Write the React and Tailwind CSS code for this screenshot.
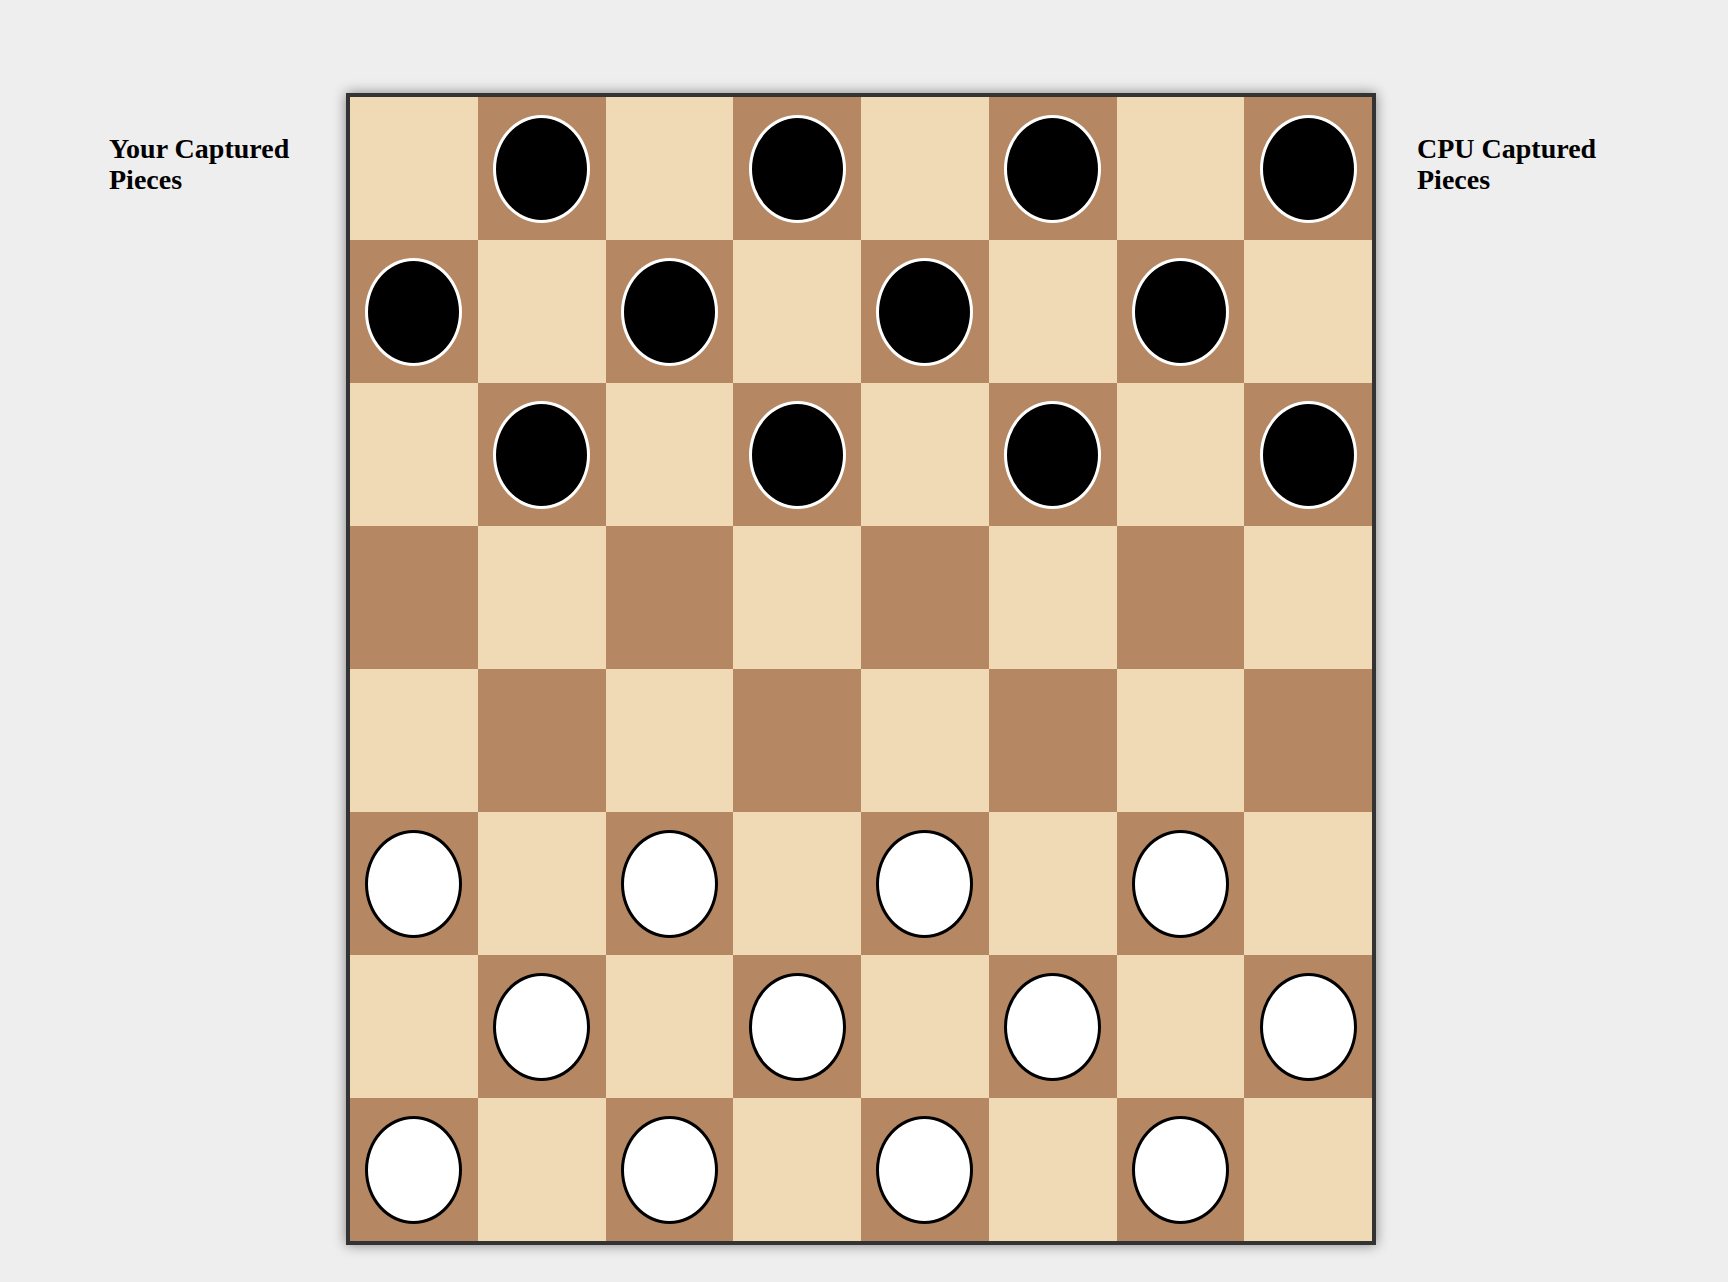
import React from 'react';

// 8x8 board: rows 0-2 hold the CPU's black men, rows 5-7 the player's white men
const buildBoard = () => {
  const rows = [];
  for (let r = 0; r < 8; r++) {
    const row = [];
    for (let c = 0; c < 8; c++) {
      const dark = (r + c) % 2 === 1;
      let piece = null;
      if (dark && r < 3) piece = 'black';
      if (dark && r > 4) piece = 'white';
      row.push({ dark, piece });
    }
    rows.push(row);
  }
  return rows;
};

const Piece = ({ color }) => (
  <div
    className={
      color === 'black'
        ? 'w-[97px] h-[108px] rounded-[50%] bg-black border-[3px] border-white'
        : 'w-[97px] h-[108px] rounded-[50%] bg-white border-[3px] border-black'
    }
  />
);

const App = () => {
  const board = buildBoard();

  return (
    <div className="min-h-screen w-full bg-[#eeeeee] flex items-start pt-[93px] font-['Liberation_Serif','Times_New_Roman',serif] text-black">
      {/* Left panel */}
      <div className="ml-[109px] w-[200px] pt-[40px]">
        <h2 className="text-[28px] leading-[31px] font-bold">Your Captured Pieces</h2>
      </div>

      {/* Board */}
      <div className="ml-[37px] border-4 border-[#333333] shadow-[0_0_12px_rgba(0,0,0,0.45)]">
        <div className="grid grid-cols-8 grid-rows-8 w-[1022px] h-[1144px]">
          {board.map((row, r) =>
            row.map((cell, c) => (
              <div
                key={`${r}-${c}`}
                className={`flex items-center justify-center ${cell.dark ? 'bg-[#b58863]' : 'bg-[#f0d9b5]'}`}
              >
                {cell.piece && <Piece color={cell.piece} />}
              </div>
            ))
          )}
        </div>
      </div>

      {/* Right panel */}
      <div className="ml-[41px] w-[200px] pt-[40px]">
        <h2 className="text-[28px] leading-[31px] font-bold">CPU Captured Pieces</h2>
      </div>
    </div>
  );
};

export default App;
